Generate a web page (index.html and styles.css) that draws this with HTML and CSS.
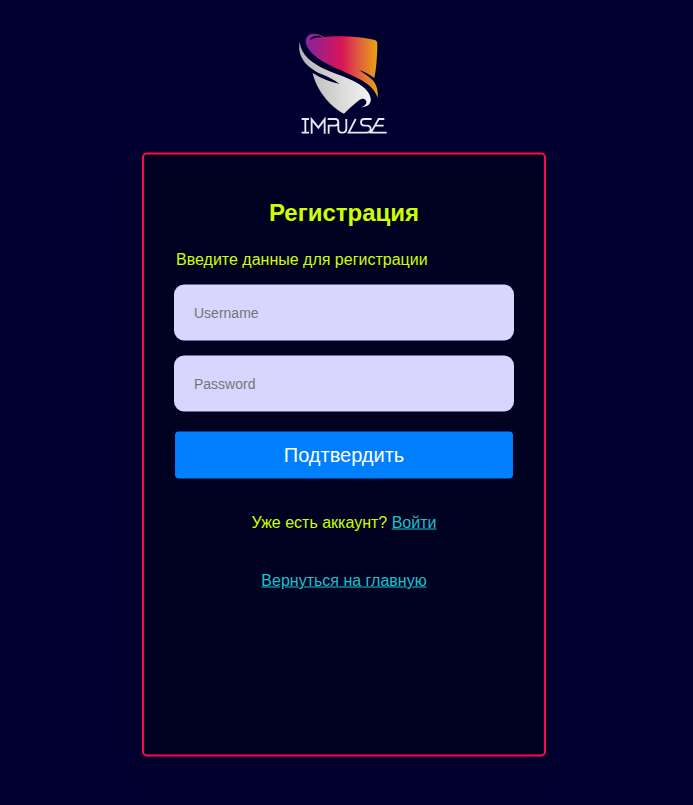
FILE: index.html
```html
<!DOCTYPE html>
<html lang="ru">
<head>
<meta charset="utf-8">
<title>Регистрация</title>
<link rel="stylesheet" href="styles.css">
</head>
<body>
<header class="brand">
<svg class="logo" viewBox="0 0 360 375" role="img" aria-label="Impulse">
<defs>
<linearGradient id="warm" gradientUnits="userSpaceOnUse" x1="65" y1="0" x2="282" y2="0">
<stop offset="0" stop-color="#86249a"/><stop offset=".25" stop-color="#ae1c7c"/><stop offset=".5" stop-color="#d91557"/><stop offset=".73" stop-color="#e05c40"/><stop offset="1" stop-color="#e8a512"/>
</linearGradient>
<linearGradient id="silver" gradientUnits="userSpaceOnUse" x1="45" y1="0" x2="260" y2="0">
<stop offset="0" stop-color="#b4b4b4"/><stop offset="1" stop-color="#f4f4f4"/>
</linearGradient>
</defs>
<path fill="url(#warm)" fill-rule="evenodd" d="M121 51C155 46 235 49 273 60Q280 62 280 70C280 105 277 145 271 174Q252 159 224 149Q252 167 268 182Q284 202 281 233C266 189 218 174 170 150C125 132 69 101 65 65C65 36 98 37 121 51ZM78 61C87 53 104 51 117 52C103 44 82 46 78 61Z"/>
<path fill="url(#silver)" d="M47 66C50 104 84 131 130 151C174 170 253 191 260 235C263 251 251 261 231 262Q244 257 247 249C249 238 236 231 225 241C211 252 195 267 180 281C136 259 96 207 86 159Q124 183 167 192Q145 175 106 160C66 139 39 110 47 66Z"/>
<path class="wordmark" d="M53 297H75M64 297V338M53 338H75M83 341V298L103 323L122 298V341M131 297H153Q163 297 163 307Q163 317 153 317H134V341M163 305V326Q163 338 174 338Q187 338 187 326V297M215 297L194 338H221M263 297H241Q231 297 231 307Q231 317 242 317H249Q260 317 260 328Q260 338 248 338H217M301 297H284L261 338H308M272 317H299"/>
</svg>
</header>
<main class="card">
<h2 class="title">Регистрация</h2>
<form class="form">
<p class="hint">Введите данные для регистрации</p>
<input class="field" type="text" placeholder="Username" aria-label="Username">
<input class="field" type="password" placeholder="Password" aria-label="Password">
<button class="submit" type="button">Подтвердить</button>
</form>
<p class="login">Уже есть аккаунт? <a class="link" href="#">Войти</a></p>
<p class="home"><a class="link" href="#">Вернуться на главную</a></p>
</main>
</body>
</html>
```
FILE: styles.css
```css
* { box-sizing: border-box; }

body {
  margin: 0;
  height: 805px;
  overflow: hidden;
  background: #000030;
  color: #ccff00;
  font: 16px "Liberation Sans", Arial, sans-serif;
}

.brand {
  height: 152px;
  padding: 20px 0 0 284px;
}

.logo {
  display: block;
  width: 120px;
  height: 125px;
}

.wordmark {
  fill: none;
  stroke: #e9e9f4;
  stroke-width: 5.5;
}

.card {
  width: 404px;
  height: 604px;
  margin-left: 142px;
  padding: 44px 30px 0;
  border: 2px solid #ff0a47;
  border-radius: 5px;
  background: #000020;
  box-shadow: 0 15px 25px rgba(0, 0, 0, .1);
  text-align: center;
  transform: translateY(.5px);
}

.title {
  margin: 0;
  font-size: 24px;
  line-height: 28px;
}

.form {
  display: flex;
  flex-direction: column;
}

.hint {
  margin: 24px 2px 16px;
  line-height: 18px;
  text-align: left;
}

.field {
  height: 56px;
  margin: 0 0 15px;
  padding: 0 20px;
  border: 0;
  border-radius: 10px;
  background: #d8d6ff;
  font: 14px "Liberation Sans", Arial, sans-serif;
}

.field::placeholder { color: #757575; }

.submit {
  height: 47px;
  margin: 5px 1px 0;
  padding: 0;
  border: 0;
  border-radius: 4px;
  background: #0080ff;
  color: #fff;
  font: 20px "Liberation Sans", Arial, sans-serif;
}

.login {
  margin: 35px 0 0;
  line-height: 18px;
}

.home {
  margin: 40px 0 0;
  line-height: 18px;
}

.link { color: #17c3ce; }
```
